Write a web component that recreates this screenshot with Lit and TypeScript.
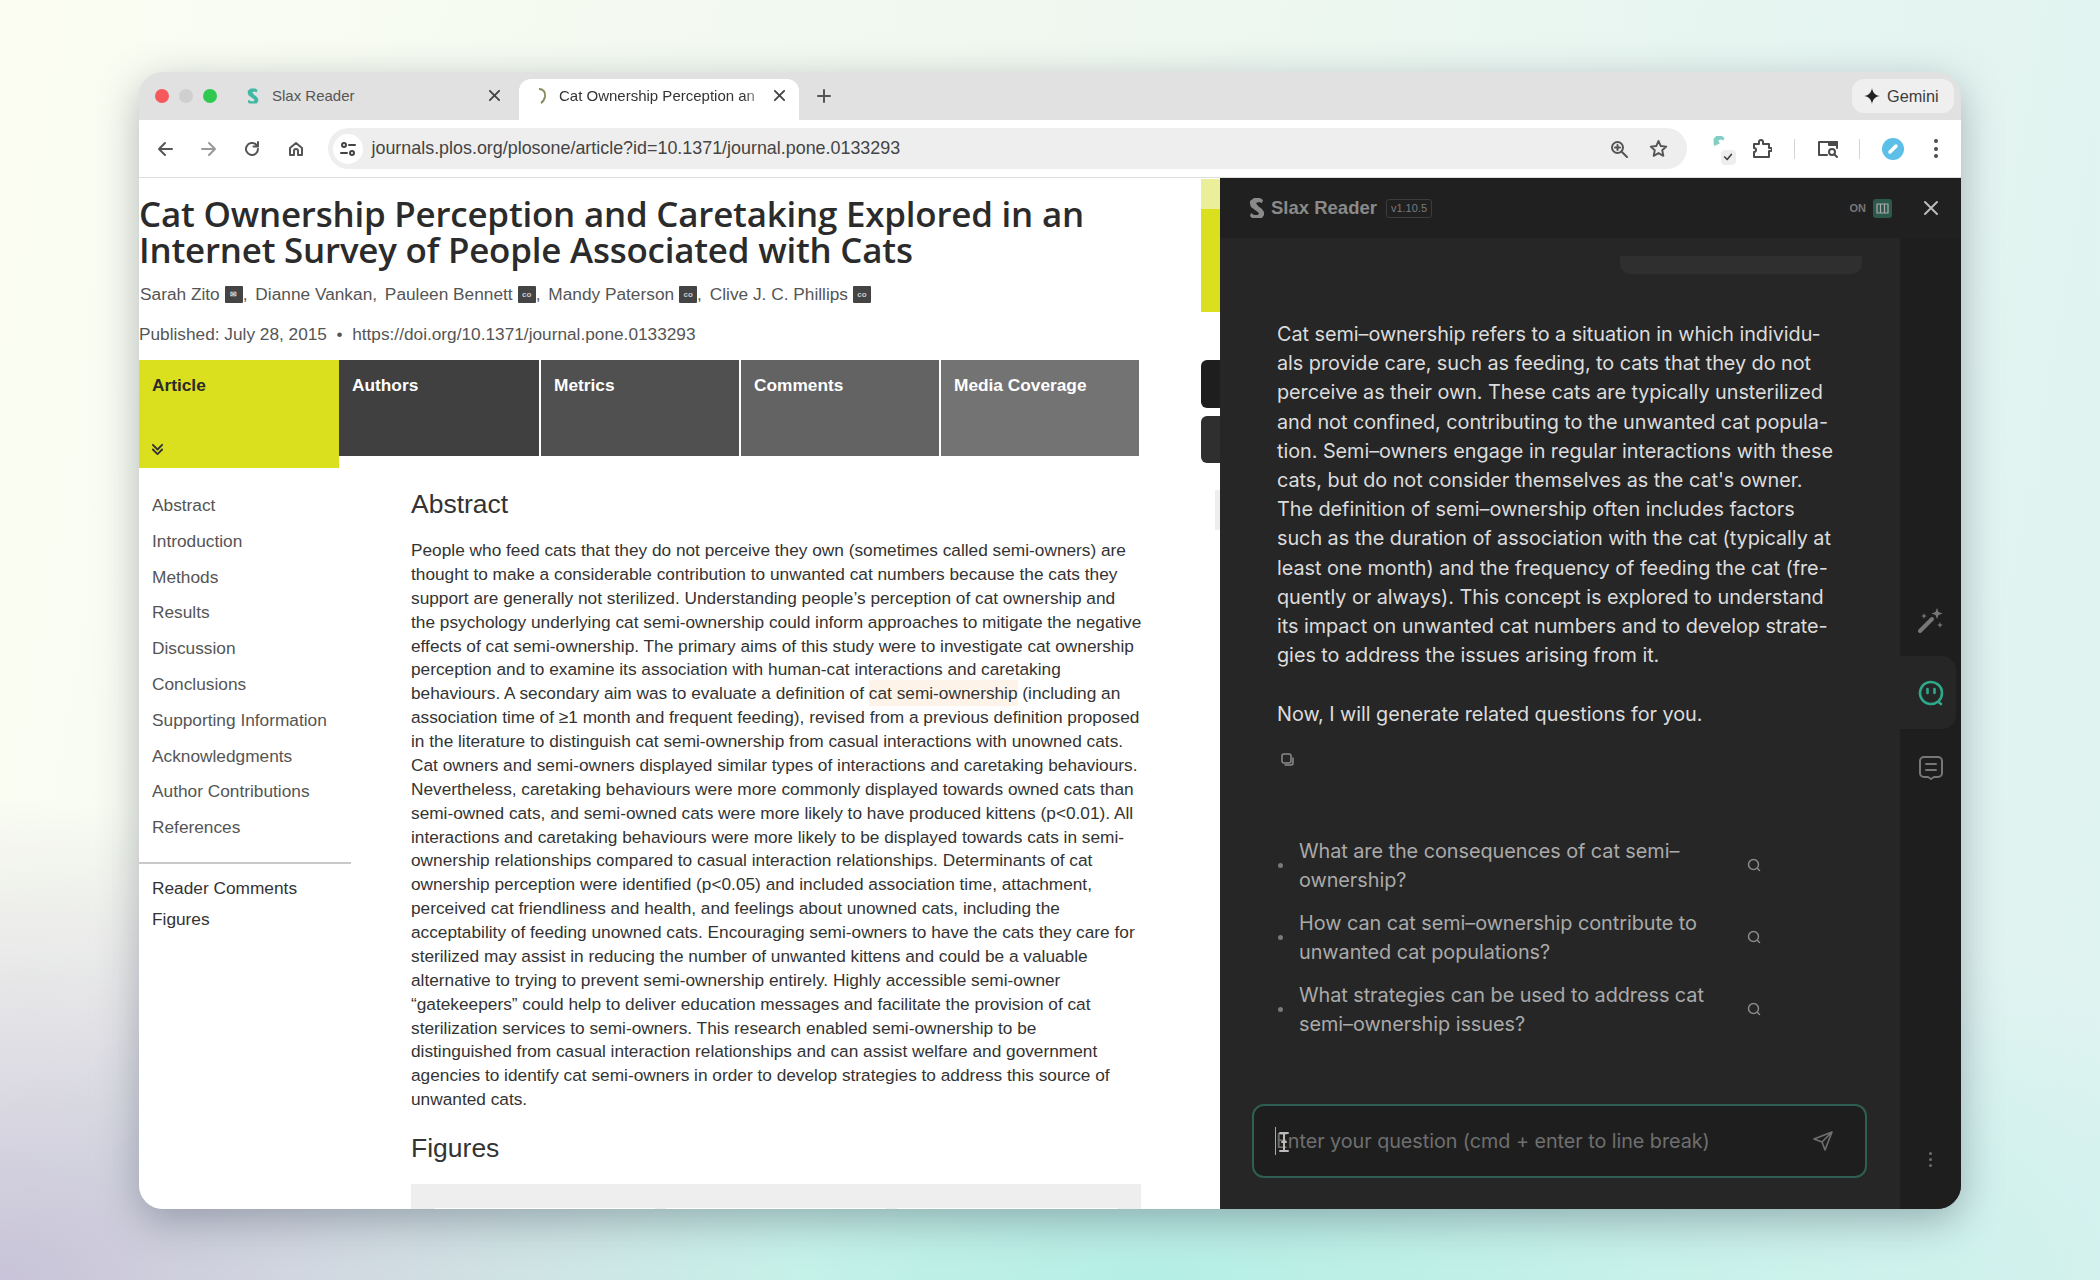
import { LitElement, html, css, svg } from "lit";
import { customElement } from "lit/decorators.js";

const abstractLines = [
  "People who feed cats that they do not perceive they own (sometimes called semi-owners) are",
  "thought to make a considerable contribution to unwanted cat numbers because the cats they",
  "support are generally not sterilized. Understanding people’s perception of cat ownership and",
  "the psychology underlying cat semi-ownership could inform approaches to mitigate the negative",
  "effects of cat semi-ownership. The primary aims of this study were to investigate cat ownership",
  "perception and to examine its association with human-cat interactions and caretaking",
  "@",
  "association time of ≥1 month and frequent feeding), revised from a previous definition proposed",
  "in the literature to distinguish cat semi-ownership from casual interactions with unowned cats.",
  "Cat owners and semi-owners displayed similar types of interactions and caretaking behaviours.",
  "Nevertheless, caretaking behaviours were more commonly displayed towards owned cats than",
  "semi-owned cats, and semi-owned cats were more likely to have produced kittens (p<0.01). All",
  "interactions and caretaking behaviours were more likely to be displayed towards cats in semi-",
  "ownership relationships compared to casual interaction relationships. Determinants of cat",
  "ownership perception were identified (p<0.05) and included association time, attachment,",
  "perceived cat friendliness and health, and feelings about unowned cats, including the",
  "acceptability of feeding unowned cats. Encouraging semi-owners to have the cats they care for",
  "sterilized may assist in reducing the number of unwanted kittens and could be a valuable",
  "alternative to trying to prevent semi-ownership entirely. Highly accessible semi-owner",
  "“gatekeepers” could help to deliver education messages and facilitate the provision of cat",
  "sterilization services to semi-owners. This research enabled semi-ownership to be",
  "distinguished from casual interaction relationships and can assist welfare and government",
  "agencies to identify cat semi-owners in order to develop strategies to address this source of",
  "unwanted cats.",
];

const answerLines = [
  "Cat semi–ownership refers to a situation in which individu-",
  "als provide care, such as feeding, to cats that they do not",
  "perceive as their own. These cats are typically unsterilized",
  "and not confined, contributing to the unwanted cat popula-",
  "tion. Semi–owners engage in regular interactions with these",
  "cats, but do not consider themselves as the cat's owner.",
  "The definition of semi–ownership often includes factors",
  "such as the duration of association with the cat (typically at",
  "least one month) and the frequency of feeding the cat (fre-",
  "quently or always). This concept is explored to understand",
  "its impact on unwanted cat numbers and to develop strate-",
  "gies to address the issues arising from it.",
];

const questions = [
  ["What are the consequences of cat semi–", "ownership?"],
  ["How can cat semi–ownership contribute to", "unwanted cat populations?"],
  ["What strategies can be used to address cat", "semi–ownership issues?"],
];

const tabs = [
  ["Authors", "#404040"],
  ["Metrics", "#505050"],
  ["Comments", "#636363"],
  ["Media Coverage", "#737373"],
];

const sideLinks = ["Abstract", "Introduction", "Methods", "Results", "Discussion", "Conclusions", "Supporting Information", "Acknowledgments", "Author Contributions", "References"];

const icon = (w: number, h: number, vb: string, body: unknown) =>
  html`<svg width=${w} height=${h} viewBox=${vb} fill="none" stroke="currentColor" stroke-width="2" stroke-linecap="round" stroke-linejoin="round">${body}</svg>`;

const slaxLogo = (c: string, w = 16, h = 20) => html`<svg width=${w} height=${h} viewBox="0 0 16 20" fill=${c}><path d="M5 0h6l3 2-1 3-3-1-3 1 2 3 4 3 2 3v3l-2 3H3l-2-2 1-3 3 2h4l1-2-4-3-4-3-1-3V3z"/></svg>`;

@customElement("app-root")
export class AppRoot extends LitElement {
  static styles = css`
    :host {
      display: block;
      width: 2100px;
      height: 1280px;
      box-sizing: border-box;
      padding: 72px 139px 71px;
      background:
        radial-gradient(800px 480px at 0% 100%, #c8c3d8 0%, rgba(200, 195, 216, 0) 100%),
        radial-gradient(1300px 420px at 55% 100%, #b4eee5 0%, rgba(180, 238, 229, 0) 100%),
        linear-gradient(100deg, #fbfdf2 0%, #f0f8f0 45%, #dff3f1 100%);
      font-family: "Liberation Sans", Arial, sans-serif;
      overflow: hidden;
    }
    .window {
      height: 100%;
      display: flex;
      flex-direction: column;
      background: #e1e1e1;
      border-radius: 24px;
      overflow: hidden;
      box-shadow: 0 12px 40px rgba(50, 60, 80, 0.36);
    }
    .tabbar {
      height: 48px;
      flex: none;
      display: flex;
      align-items: flex-end;
      padding-left: 16px;
      position: relative;
    }
    .lights {
      display: flex;
      gap: 10px;
      align-self: center;
      margin-top: -1px;
      width: 92px;
      flex: none;
    }
    .lights i { width: 14px; height: 14px; border-radius: 50%; background: #cfcfcf; }
    .lights i:first-child { background: #f5595b; }
    .lights i:last-child { background: #2fc950; }
    .tab {
      display: flex;
      align-items: center;
      height: 41px;
      width: 280px;
      box-sizing: border-box;
      font-size: 15px;
      color: #555;
      flex: none;
      padding-bottom: 8px;
    }
    .tab.first { width: 276px; margin-left: -4px; }
    .tab.active { background: #fff; color: #333; border-radius: 12px 12px 0 0; padding-left: 14px; }
    .tab .favicon { width: 20px; height: 20px; flex: none; display: flex; align-items: center; justify-content: center; }
    .tab .label { margin-left: 6px; flex: 1; overflow: hidden; white-space: nowrap; }
    .tab.first .label { margin-left: 9px; }
    .tab.active .label { -webkit-mask-image: linear-gradient(90deg, #000 86%, transparent 99%); mask-image: linear-gradient(90deg, #000 86%, transparent 99%); }
    .tab .close { flex: none; width: 13px; height: 13px; margin-right: 13px; color: #444; display: flex; }
    .tab.first .close { margin-right: 18px; }
    .plus { align-self: center; margin-left: 17px; color: #555; display: flex; margin-top: -1px; }
    .gemini {
      position: absolute;
      right: 7px;
      top: 7px;
      height: 34px;
      width: 102px;
      box-sizing: border-box;
      border-radius: 12px;
      background: #efefef;
      display: flex;
      align-items: center;
      gap: 7px;
      padding-left: 12px;
      font-size: 16.3px;
      color: #3c3c3c;
    }
    .toolbar {
      height: 57px;
      flex: none;
      background: #fff;
      display: flex;
      align-items: center;
      border-bottom: 1px solid #ddd;
      box-sizing: content-box;
      color: #555;
    }
    .nav { width: 32px; display: flex; justify-content: center; margin-left: 11.5px; flex: none; }
    .nav.first { margin-left: 10px; }
    .nav.off { color: #999; }
    .url {
      flex: none;
      margin-left: 16px;
      width: 1359px;
      height: 41px;
      box-sizing: border-box;
      border-radius: 21px;
      background: #eeeeee;
      display: flex;
      align-items: center;
      padding: 0 19px 0 5px;
    }
    .tune { width: 30px; height: 30px; border-radius: 50%; background: #fff; display: flex; align-items: center; justify-content: center; flex: none; color: #444; }
    .url-text { margin-left: 9px; font-size: 17.9px; color: #444; flex: 1; white-space: nowrap; }
    .url-icons { display: flex; gap: 21px; color: #555; align-items: center; }
    .tools { display: flex; align-items: center; margin-left: 24px; color: #4b4b4b; flex: none; }
    .ext { width: 22px; height: 26px; position: relative; }
    .ext .check { position: absolute; right: -3px; bottom: -3px; width: 15px; height: 15px; background: #eee; border-radius: 4px; display: flex; align-items: center; justify-content: center; color: #444; }
    .puzzle { margin-left: 19px; display: flex; }
    .side-panel { display: flex; margin-right: -2px; }
    .tool-sep { width: 1px; height: 20px; background: #d4d4d4; margin: 0 22px; }
    .avatar { width: 22px; height: 22px; border-radius: 50%; background: #5cbfe8; display: flex; align-items: center; justify-content: center; color: #fff; }
    .dots { display: flex; flex-direction: column; gap: 3.5px; margin-left: 30px; }
    .dots i { width: 4px; height: 4px; border-radius: 50%; background: #4b4b4b; }

    .content { flex: 1; display: flex; min-height: 0; }
    .page { width: 1081px; flex: none; background: #fff; position: relative; overflow: hidden; color: #333; }
    .title {
      font-family: "Open Sans", sans-serif;
      font-weight: 600;
      font-size: 34.9px;
      line-height: 36px;
      margin: 18px 0 0;
      color: #2b2b2b;
      letter-spacing: -0.2px;
    }
    .authors { display: flex; align-items: center; font-size: 17.3px; color: #555; margin-top: 14px; height: 24px; padding-left: 1px; white-space: pre; }
    .badge { width: 18px; height: 17px; background: #444; color: #ccc; font-size: 8px; font-weight: 700; display: inline-flex; align-items: center; justify-content: center; margin-left: 5px; border-radius: 1px; }
    .sep { margin-right: 3px; }
    .pub { font-size: 17.25px; color: #555; margin-top: 16px; height: 24px; line-height: 24px; white-space: nowrap; }
    .tabs { display: flex; align-items: flex-start; margin-top: 14px; width: 1001px; }
    .art-tab { width: 200px; height: 108px; flex: none; background: #dbe01e; box-sizing: border-box; padding: 15px 13px 0; font-size: 17.3px; font-weight: 700; color: #2b2b2b; position: relative; }
    .art-tab svg { position: absolute; left: 12px; bottom: 12px; }
    .doc-tab { width: 200px; height: 96px; flex: none; box-sizing: border-box; padding: 15px 13px 0; font-size: 17.3px; font-weight: 700; color: #fff; border-left: 2px solid #fff; }
    .doc-tab.first { border-left: none; }
    .doc-body { display: flex; }
    .side { width: 212px; flex: none; padding-top: 20px; }
    .side a { display: block; height: 35.8px; line-height: 35.8px; padding-left: 13px; font-size: 17.3px; color: #555; white-space: nowrap; }
    .side hr { border: 0; border-top: 2px solid #c9c9c9; margin: 16px 0 9px; }
    .side b { display: block; font-weight: 400; height: 31px; line-height: 31px; padding-left: 13px; font-size: 17.3px; color: #333; white-space: nowrap; }
    .main { margin-left: 60px; width: 730px; margin-top: 20px; }
    .main h2 { font-weight: 400; font-size: 26.5px; line-height: 32px; margin: 0; color: #333; }
    .abstract { margin-top: 19px; font-size: 17.27px; line-height: 23.87px; color: #333; white-space: nowrap; }
    .hl { background: #fdf3e8; padding: 3px 0; }
    .main h2.figures-h { margin-top: 20px; }
    .figs { margin-top: 20px; height: 60px; background: #eeeeee; padding: 24px 24px 0; display: flex; gap: 11px; box-sizing: border-box; }
    .figs i { width: 220px; height: 40px; background: #fff; }
    .mark { position: absolute; right: 0; width: 19px; }
    .mark.a { top: 1px; height: 30px; background: #ecef9a; }
    .mark.b { top: 31px; height: 103px; background: #dbe01e; }
    .mark.c { top: 182px; height: 48px; background: #1e1e1e; border-radius: 6px 0 0 6px; }
    .mark.d { top: 238px; height: 47px; background: #2f2f2f; border-radius: 6px 0 0 6px; }
    .mark.e { top: 312px; height: 40px; width: 5px; background: #eee; }

    .panel { flex: 1; display: flex; flex-direction: column; background: #262626; position: relative; min-width: 0; }
    .p-head { height: 60px; flex: none; background: #202020; display: flex; align-items: center; padding-left: 29px; color: #8a8a8a; }
    .p-head .name { font-size: 18.5px; font-weight: 700; margin-left: 6px; white-space: nowrap; }
    .ver { margin-left: 9px; border: 1px solid #3c3c3c; border-radius: 3px; font-size: 11px; padding: 1px 4px; color: #7a7a7a; height: 15px; line-height: 15px; }
    .on { margin-left: auto; font-size: 11px; font-weight: 700; color: #777; }
    .columns { width: 19px; height: 19px; background: #2b5a4d; border-radius: 3px; margin-left: 7px; display: flex; align-items: center; justify-content: center; color: #aaa; }
    .p-close { margin: 0 22px 0 31px; color: #bbb; display: flex; }
    .p-body { flex: 1; display: flex; min-height: 0; }
    .chat { width: 680px; flex: none; }
    .pill { height: 18px; width: 242px; margin: 18px 0 0 400px; background: #2f2f2f; border-radius: 0 0 10px 10px; }
    .answer { margin: 46px 0 0 57px; font-family: Inter, sans-serif; font-size: 19.85px; line-height: 29.2px; color: #dcdcdc; white-space: nowrap; letter-spacing: -0.05px; }
    .answer p { margin: 29.2px 0 0; }
    .copy { margin: 23px 0 0 60px; color: #8a8a8a; height: 16px; }
    .qs { margin: 69px 0 0 57px; width: 540px; }
    .q { display: flex; align-items: center; height: 58px; margin-bottom: 14px; color: #aaa; font-family: Inter, sans-serif; font-size: 19.85px; line-height: 29px; letter-spacing: -0.05px; }
    .q .dot { width: 5px; height: 5px; border-radius: 50%; background: #7a7a7a; flex: none; margin-left: 1px; }
    .q .txt { margin-left: 16px; width: 449px; flex: none; white-space: nowrap; }
    .q svg { margin-left: -1px; margin-top: -2px; color: #8a8a8a; flex: none; }
    .rail { flex: 1; background: #1e1e1e; display: flex; flex-direction: column; position: relative; }
    .r-item { display: flex; align-items: center; justify-content: center; height: 73px; color: #777; flex: none; }
    .r-item.on-tab { background: #262626; color: #2ea88b; border-radius: 0 14px 14px 0; margin-right: 5px; padding-left: 5px; margin-bottom: 2px; }
    .r-spacer { height: 345px; flex: none; }
    .r-more { position: absolute; bottom: 42px; left: 29px; display: flex; flex-direction: column; gap: 3px; }
    .r-more i { width: 3px; height: 3px; border-radius: 50%; background: #6a6a6a; }
    .composer-wrap { position: absolute; left: 32px; width: 615px; bottom: 31px; }
    .composer { height: 74px; box-sizing: border-box; border: 2px solid #2e5f52; border-radius: 12px; background: #1e1e1e; display: flex; align-items: center; padding: 0 31px 0 21px; color: #6f6f6f; font-family: Inter, sans-serif; font-size: 19.8px; position: relative; }
    .composer .ph { flex: 1; border-left: 1.5px solid #aaa; line-height: 28px; white-space: nowrap; letter-spacing: -0.05px; }
    .beam { position: absolute; left: 24px; top: 25px; color: #bbb; }
  `;

  render() {
    const x = icon(13, 13, "0 0 14 14", svg`<path d="M2 2l10 10M12 2L2 12"/>`);
    return html`
      <div class="window">
        <div class="tabbar">
          <div class="lights"><i></i><i></i><i></i></div>
          <div class="tab first">
            <span class="favicon">${slaxLogo("#3fb8a4", 12, 18)}</span>
            <span class="label">Slax Reader</span>
            <span class="close">${x}</span>
          </div>
          <div class="tab active">
            <span class="favicon"><svg width="16" height="20" viewBox="0 0 16 20" fill="none" stroke="#8d8a60" stroke-width="2"><path d="M4 3c4 0 7 3 6 8-1 3-2 5-4 6"/></svg></span>
            <span class="label">Cat Ownership Perception an</span>
            <span class="close">${x}</span>
          </div>
          <span class="plus">${icon(16, 16, "0 0 16 16", svg`<path d="M8 2v12M2 8h12"/>`)}</span>
          <div class="gemini">
            <svg width="16" height="16" viewBox="0 0 16 16" fill="#222"><path d="M8 0c.6 4.6 3.4 7.4 8 8-4.6.6-7.400 3.400-8 8-.6-4.600-3.400-7.400-8-8 4.600-.6 7.400-3.400 8-8z"/></svg>
            Gemini
          </div>
        </div>

        <div class="toolbar">
          <span class="nav first">${icon(18, 18, "0 0 18 18", svg`<path d="M16 9H3M9 3L3 9l6 6"/>`)}</span>
          <span class="nav off">${icon(18, 18, "0 0 18 18", svg`<path d="M2 9h13M9 3l6 6-6 6"/>`)}</span>
          <span class="nav">${icon(18, 18, "0 0 18 18", svg`<path d="M15 9a6 6 0 1 1-2-4.500L15 6.500M15 2v4.500h-4.500"/>`)}</span>
          <span class="nav">${icon(18, 18, "0 0 18 18", svg`<path d="M3 8l6-5 6 5v7h-4v-4a2 2 0 0 0-4 0v4H3z"/>`)}</span>
          <div class="url">
            <span class="tune">${icon(16, 16, "0 0 16 16", svg`<circle cx="4" cy="4" r="2"/><path d="M9 4h6M1 12h6"/><circle cx="12" cy="12" r="2"/>`)}</span>
            <span class="url-text">journals.plos.org/plosone/article?id=10.1371/journal.pone.0133293</span>
            <span class="url-icons">
              ${icon(18, 18, "0 0 18 18", svg`<circle cx="7.500" cy="7.500" r="5.500"/><path d="M12 12l5 5M5 7.500h5M7.500 5v5"/>`)}
              ${icon(19, 19, "0 0 20 20", svg`<path d="M10 2l2.400 5.400 5.800.6-4.300 3.900 1.200 5.800L10 14.800l-5.100 2.900 1.200-5.800L1.800 8l5.800-.6z"/>`)}
            </span>
          </div>
          <div class="tools">
            <span class="ext">
              <svg width="16" height="18" viewBox="0 0 16 20" fill="#7fcfc4"><path d="M5 0h6l3 2-1 3-3-1-3 1 2 3-6 3-1-3V3z"/></svg>
              <span class="check">${icon(10, 10, "0 0 12 12", svg`<path d="M2 6l3 3 5-6"/>`)}</span>
            </span>
            <span class="puzzle">${icon(20, 20, "0 0 20 20", svg`<path d="M2 5h5V3a2 2 0 0 1 4 0v2h6v4h1.500a1.500 1.500 0 0 1 0 3H17v6H2v-5a2 2 0 0 0 0-4z"/>`)}</span>
            <span class="tool-sep"></span>
            <span class="side-panel">${icon(22, 20, "0 0 22 20", svg`<path d="M10 16H2V3h18v6"/><rect x="12" y="3" width="8" height="3" fill="currentColor"/><circle cx="15" cy="13" r="3"/><path d="M17.500 15.500L20 18"/>`)}</span>
            <span class="tool-sep"></span>
            <span class="avatar">${icon(12, 12, "0 0 12 12", svg`<path d="M3 9l6-6" stroke-width="3.500"/>`)}</span>
            <span class="dots"><i></i><i></i><i></i></span>
          </div>
        </div>

        <div class="content">
          <div class="page">
            <h1 class="title">Cat Ownership Perception and Caretaking Explored in an<br />Internet Survey of People Associated with Cats</h1>
            <div class="authors">Sarah Zito<span class="badge">✉</span><span class="sep">, </span>Dianne Vankan<span class="sep">, </span>Pauleen Bennett<span class="badge">co</span><span class="sep">, </span>Mandy Paterson<span class="badge">co</span><span class="sep">, </span>Clive J. C. Phillips<span class="badge">co</span></div>
            <div class="pub">Published: July 28, 2015 &nbsp;•&nbsp; https://doi.org/10.1371/journal.pone.0133293</div>
            <div class="tabs">
              <div class="art-tab">Article
                ${icon(13, 13, "0 0 14 14", svg`<path d="M2 2l5 5 5-5M2 7l5 5 5-5" stroke="#333"/>`)}
              </div>
              ${tabs.map(([t, c], i) => html`<div class="doc-tab ${i === 0 ? "first" : ""}" style="background:${c}">${t}</div>`)}
            </div>
            <div class="doc-body">
              <div class="side">
                ${sideLinks.map((l) => html`<a>${l}</a>`)}
                <hr />
                <b>Reader Comments</b>
                <b>Figures</b>
              </div>
              <div class="main">
                <h2>Abstract</h2>
                <div class="abstract">
                  ${abstractLines.map((l) =>
                    l === "@"
                      ? html`<div>behaviours. A secondary aim was to evaluate a definition of <span class="hl">cat semi-ownership</span> (including an</div>`
                      : html`<div>${l}</div>`
                  )}
                </div>
                <h2 class="figures-h">Figures</h2>
                <div class="figs"><i></i><i></i><i></i></div>
              </div>
            </div>
            <div class="mark a"></div><div class="mark b"></div><div class="mark c"></div><div class="mark d"></div><div class="mark e"></div>
          </div>

          <div class="panel">
            <div class="p-head">
              ${slaxLogo("#8a8a8a")}
              <span class="name">Slax Reader</span>
              <span class="ver">v1.10.5</span>
              <span class="on">ON</span>
              <span class="columns">${icon(13, 11, "0 0 13 11", svg`<path d="M1 1h11v9H1zM4.500 1v9M8.500 1v9" stroke-width="1.200"/>`)}</span>
              <span class="p-close">${icon(16, 16, "0 0 16 16", svg`<path d="M2 2l12 12M14 2L2 14"/>`)}</span>
            </div>
            <div class="p-body">
              <div class="chat">
                <div class="pill"></div>
                <div class="answer">
                  ${answerLines.map((l) => html`<div>${l}</div>`)}
                  <p>Now, I will generate related questions for you.</p>
                </div>
                <div class="copy">${icon(15, 15, "0 0 15 15", svg`<rect x="2" y="2" width="9" height="9" rx="2" stroke-width="1.500"/><path d="M5 13h6a2 2 0 0 0 2-2V6" stroke-width="1.500"/>`)}</div>
                <div class="qs">
                  ${questions.map(
                    ([a, b]) => html`<div class="q">
                      <span class="dot"></span>
                      <span class="txt">${a}<br />${b}</span>
                      ${icon(14, 14, "0 0 14 14", svg`<circle cx="6.500" cy="6.500" r="5" stroke-width="1.500"/><path d="M10.500 10.500l2 2" stroke-width="1.500"/>`)}
                    </div>`
                  )}
                </div>
              </div>
              <div class="rail">
                <div class="r-spacer"></div>
                <div class="r-item">${icon(30, 30, "0 0 30 30", svg`<path d="M4 26L16 14" stroke-width="4"/><path d="M21 3l1.500 4 4 1.500-4 1.500-1.500 4-1.500-4-4-1.500 4-1.500zM8 8l.8 2.200 2.200.8-2.200.8L8 14l-.8-2.200L5 11l2.200-.8zM24 17l.8 2.200 2.200.8-2.200.8-.8 2.200-.8-2.200-2.200-.8 2.200-.8z" fill="currentColor" stroke="none"/>`)}</div>
                <div class="r-item on-tab">${icon(28, 28, "0 0 28 28", svg`<path d="M24 25l-3-2.500A11 11 0 1 1 25 14c0 3-1 5.500-3 7.500" stroke-width="2.600"/><path d="M10.500 10v4M17.500 10v4" stroke-width="2.600"/>`)}</div>
                <div class="r-item">${icon(28, 28, "0 0 28 28", svg`<path d="M7 3h14a4 4 0 0 1 4 4v12a4 4 0 0 1-4 4h-4l-3 2-3-2H7a4 4 0 0 1-4-4V7a4 4 0 0 1 4-4z"/><path d="M9 10h10M9 16h10"/>`)}</div>
                <div class="r-more"><i></i><i></i><i></i></div>
              </div>
            </div>
            <div class="composer-wrap">
              <div class="composer">
                <span class="ph">Enter your question (cmd + enter to line break)</span>
                ${icon(22, 22, "0 0 22 22", svg`<path d="M20 2L2 9l8 3 3 8zM20 2L10 12" stroke-width="1.600"/>`)}
                <span class="beam">${icon(12, 22, "0 0 12 22", svg`<path d="M2 2h8M6 2v18M2 20h8M4 11h4" stroke-width="2"/>`)}</span>
              </div>
            </div>
          </div>
        </div>
      </div>
    `;
  }
}
